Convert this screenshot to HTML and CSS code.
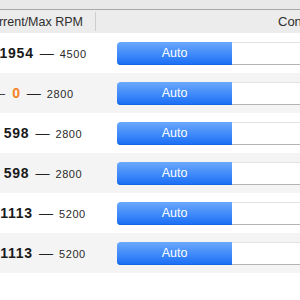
FILE: index.html
```html
<!DOCTYPE html>
<html>
<head>
<meta charset="utf-8">
<link rel="stylesheet" href="styles.css">
</head>
<body>
<div class="window">
  <div class="strip"></div>
  <div class="header">
    <div class="hcell hcell-rpm"><span>Current/Max RPM</span></div>
    <div class="hcell hcell-control"><span>Control</span></div>
  </div>
  <div class="rows">
    <div class="row">
      <div class="rpm"><b class="cur">1954</b><span class="dash">—</span><span class="max">4500</span></div>
      <div class="ctrl"><div class="seg"><div class="seg-on">Auto</div><div class="seg-off"></div></div></div>
    </div>
    <div class="row alt">
      <div class="rpm"><span class="lead">—</span><b class="cur zero">0</b><span class="dash">—</span><span class="max">2800</span></div>
      <div class="ctrl"><div class="seg"><div class="seg-on">Auto</div><div class="seg-off"></div></div></div>
    </div>
    <div class="row">
      <div class="rpm"><b class="cur">598</b><span class="dash">—</span><span class="max">2800</span></div>
      <div class="ctrl"><div class="seg"><div class="seg-on">Auto</div><div class="seg-off"></div></div></div>
    </div>
    <div class="row alt">
      <div class="rpm"><b class="cur">598</b><span class="dash">—</span><span class="max">2800</span></div>
      <div class="ctrl"><div class="seg"><div class="seg-on">Auto</div><div class="seg-off"></div></div></div>
    </div>
    <div class="row">
      <div class="rpm"><b class="cur">1113</b><span class="dash">—</span><span class="max">5200</span></div>
      <div class="ctrl"><div class="seg"><div class="seg-on">Auto</div><div class="seg-off"></div></div></div>
    </div>
    <div class="row alt">
      <div class="rpm"><b class="cur">1113</b><span class="dash">—</span><span class="max">5200</span></div>
      <div class="ctrl"><div class="seg"><div class="seg-on">Auto</div><div class="seg-off"></div></div></div>
    </div>
  </div>
</div>
</body>
</html>
```

FILE: styles.css
```css
html, body {
  margin: 0;
  padding: 0;
  background: #ffffff;
  overflow: hidden;
}
body {
  width: 300px;
  height: 300px;
  font-family: "Liberation Sans", Arial, sans-serif;
  color: #1c1c1c;
}
.window {
  width: 300px;
  overflow: hidden;
}
.strip {
  height: 9px;
  background: #e9e9e9;
  border-bottom: 1px solid #a9a9a9;
}
.header {
  height: 23px;
  background: #ececec;
  display: flex;
  align-items: center;
}
.hcell {
  display: flex;
  align-items: center;
  white-space: nowrap;
  font-size: 12.5px;
  color: #2e2e2e;
}
.hcell-rpm {
  width: 83px;
  flex: none;
  height: 19px;
  padding-right: 12px;
  border-right: 1px solid #cdcdcd;
  justify-content: flex-end;
}
.hcell-control {
  padding-left: 182px;
  font-size: 13px;
}
.row {
  height: 40px;
  display: flex;
  align-items: center;
  background: #ffffff;
}
.row.alt {
  background: #f4f4f4;
}
.rpm {
  position: relative;
  width: 86px;
  flex: none;
  display: flex;
  justify-content: center;
  align-items: baseline;
  white-space: nowrap;
  height: 40px;
  line-height: 41px;
}
.cur {
  font-size: 14px;
  font-weight: bold;
  letter-spacing: 0.8px;
  color: #1a1a1a;
}
.cur.zero {
  color: #f5821f;
}
.dash {
  font-size: 14px;
  color: #222;
  margin: 0 6px;
}
.max {
  font-size: 11px;
  letter-spacing: 0.6px;
  color: #2a2a2a;
}
.lead {
  position: absolute;
  left: -9px;
  top: 0;
  font-size: 14px;
  color: #444;
}
.ctrl {
  flex: 1;
  padding-left: 31px;
  display: flex;
  align-items: center;
}
.seg {
  display: flex;
  width: 250px;
  height: 23px;
  flex: none;
}
.seg-on {
  width: 115px;
  flex: none;
  height: 23px;
  border-radius: 4px 0 0 4px;
  background: linear-gradient(#6aa9fb, #1a6ef6);
  color: #ffffff;
  font-size: 12.5px;
  line-height: 23px;
  text-align: center;
  box-shadow: inset 0 -1px 0 #1566e6;
}
.seg-off {
  flex: 1;
  height: 21px;
  background: #ffffff;
  border-top: 1px solid #e2e2e2;
  border-bottom: 1px solid #b4b4b4;
}
```
